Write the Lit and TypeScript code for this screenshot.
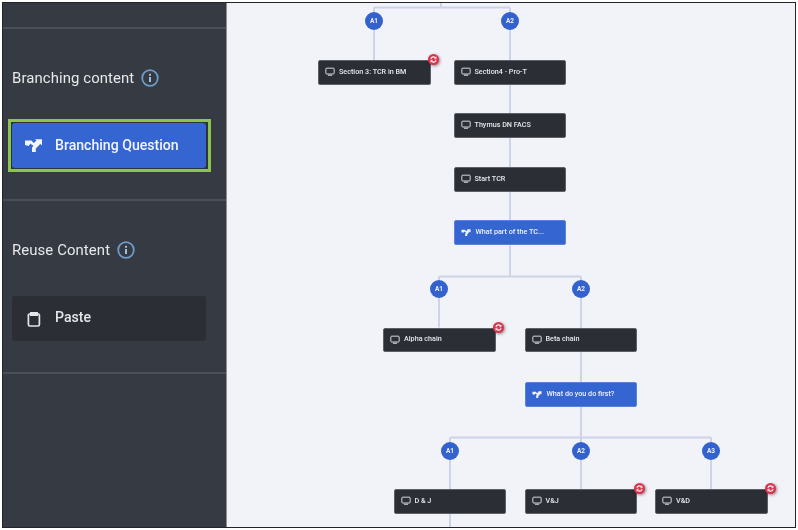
import { LitElement, html, css, svg } from "lit";
import { customElement } from "lit/decorators.js";

type Node = { x: number; y: number; label: string; q?: boolean; badge?: boolean };
type Circle = { x: number; y: number; label: string };

const ORIGIN_X = 227;
const ORIGIN_Y = 2.5;

const nodes: Node[] = [
  { x: 318, y: 60, label: "Section 3: TCR in BM", badge: true },
  { x: 453.5, y: 60, label: "Section4 - Pro-T" },
  { x: 453.5, y: 113, label: "Thymus DN FACS" },
  { x: 453.5, y: 167, label: "Start TCR" },
  { x: 453.5, y: 220, label: "What part of the TC...", q: true },
  { x: 383, y: 327.5, label: "Alpha chain", badge: true },
  { x: 524.5, y: 327.5, label: "Beta chain" },
  { x: 524.5, y: 382, label: "What do you do first?", q: true },
  { x: 393.5, y: 489, label: "D & J" },
  { x: 524.5, y: 489, label: "V&J", badge: true },
  { x: 655, y: 489, label: "V&D", badge: true },
];

const circles: Circle[] = [
  { x: 374, y: 21, label: "A1" },
  { x: 510, y: 21, label: "A2" },
  { x: 439, y: 289, label: "A1" },
  { x: 581, y: 289, label: "A2" },
  { x: 450, y: 450.5, label: "A1" },
  { x: 581, y: 450.5, label: "A2" },
  { x: 711, y: 450.5, label: "A3" },
];

const lines: [number, number, number, number][] = [
  [441, 0, 441, 7],
  [374, 7, 510, 7],
  [374, 7, 374, 60],
  [510, 7, 510, 220],
  [510, 245, 510, 276],
  [439, 276, 581, 276],
  [439, 276, 439, 327],
  [581, 276, 581, 382],
  [581, 406, 581, 437],
  [450, 437, 711, 437],
  [450, 437, 450, 527],
  [581, 437, 581, 489],
  [711, 437, 711, 489],
];

const branchIcon = (cls: string) => html`<svg class=${cls} viewBox="0 0 17 13" fill="currentColor">
  <path d="M0 1.5h6.5l2.2 2.5 2.8-2.5L9.8.3H17v6l-1.8-1.3-4.4 4.6V13H7V8.8l1.4-2-3-2L3.6 7 0 6z" />
</svg>`;

const screenIcon = html`<svg class="ico" viewBox="0 0 12 10" fill="none" stroke="currentColor" stroke-width="1.1">
  <rect x="1" y="1" width="10" height="7" rx="1" />
  <path d="M3.5 9.5h5" />
</svg>`;

const infoIcon = html`<svg class="info" viewBox="0 0 18 18" fill="none">
  <circle cx="9" cy="9" r="7.8" stroke="#6f9ac6" stroke-width="1.8" />
  <rect x="8" y="8" width="2" height="5" fill="#9dbddd" />
  <rect x="8" y="4.8" width="2" height="2" fill="#9dbddd" />
</svg>`;

@customElement("app-root")
export class AppRoot extends LitElement {
  static styles = css`
    :host {
      display: block;
      width: 798px;
      height: 530px;
      background: #fff;
      font-family: Roboto, "Liberation Sans", sans-serif;
      overflow: hidden;
    }
    .frame {
      box-sizing: border-box;
      width: 794px;
      height: 526.5px;
      margin: 1.5px 0 0 2px;
      border: 1px solid #222428;
      display: flex;
      filter: blur(0.45px);
    }
    .side {
      box-sizing: border-box;
      width: 224px;
      flex: none;
      background: #363b43;
      color: #e8eaed;
      display: flex;
      flex-direction: column;
      border-right: 1px solid #8d9097;
    }
    .sec {
      border-bottom: 2px solid #4a4f58;
      box-sizing: border-box;
      padding: 0 9px;
      flex: none;
    }
    .top { height: 26px; }
    .branch { height: 172px; padding-top: 38px; }
    .reuse { height: 173px; padding-top: 38px; }
    .head {
      display: flex;
      align-items: center;
      gap: 7px;
      height: 22px;
      font-size: 14.9px;
      letter-spacing: 0.1px;
      color: #e6e8ea;
    }
    .info { width: 18px; height: 18px; flex: none; }
    .outline {
      margin: 30px 0 0 -4px;
      width: 203px;
      height: 53px;
      box-sizing: border-box;
      border: 3px solid #8cc44f;
      padding: 1.5px 2px 0 1px;
      background: #2f333a;
    }
    .btn {
      box-sizing: border-box;
      height: 45px;
      width: 194px;
      border-radius: 3px;
      display: flex;
      align-items: center;
      gap: 13px;
      padding: 0 0 1px 13px;
      font-size: 14.1px;
      font-weight: 500;
    }
    .q {
      background: #3565d0;
      color: #f2f5ff;
    }
    .q .bi { width: 17px; height: 13px; flex: none; }
    .paste {
      margin-top: 35px;
      background: #2b2e35;
      color: #e4e6e8;
      padding-left: 15px;
      gap: 14px;
    }
    .paste svg { width: 14px; height: 16px; flex: none; margin-top: 3px; }
    .paste span { margin-bottom: 1px; }
    .canvas {
      flex: 1;
      background: #f1f3f9;
      position: relative;
      overflow: hidden;
    }
    .wires {
      position: absolute;
      left: 0;
      top: 0;
      width: 568px;
      height: 524.5px;
    }
    .layer { position: absolute; inset: 0; }
    .node {
      position: absolute;
      box-sizing: border-box;
      width: 112.5px;
      height: 24.5px;
      border-radius: 2px;
      background: #2b2e34;
      border: 1px solid #5d6167;
      color: #e6e8ec;
      font-size: 7.2px;
      font-weight: 500;
      display: flex;
      align-items: center;
      gap: 4px;
      padding: 0 0 2px 6px;
      white-space: nowrap;
    }
    .node.isq {
      background: #3565d0;
      border-color: #5b83dc;
      color: #eef2ff;
    }
    .ico { width: 10px; height: 9px; flex: none; margin-top: 1px; }
    .bis { width: 10px; height: 7px; flex: none; margin: 2px 1px 0 0; }
    .badge {
      position: absolute;
      right: -9px;
      top: -7px;
      width: 11px;
      height: 11px;
      border-radius: 50%;
      background: #d9344d;
      box-shadow: 1px 1px 3px rgba(60, 20, 30, 0.5);
      display: flex;
      align-items: center;
      justify-content: center;
    }
    .badge svg { width: 7px; height: 7px; }
    .circle {
      position: absolute;
      width: 18px;
      height: 18px;
      margin: -9px 0 0 -9px;
      border-radius: 50%;
      background: #3362cf;
      color: #eef2ff;
      font-size: 6.5px;
      font-weight: 700;
      display: flex;
      align-items: center;
      justify-content: center;
    }
  `;

  render() {
    return html`
      <div class="frame">
        <aside class="side">
          <div class="sec top"></div>
          <div class="sec branch">
            <div class="head">Branching content ${infoIcon}</div>
            <div class="outline">
              <div class="btn q">${branchIcon("bi")}<span>Branching Question</span></div>
            </div>
          </div>
          <div class="sec reuse">
            <div class="head">Reuse Content ${infoIcon}</div>
            <div class="btn paste">
              <svg viewBox="0 0 14 16" fill="none" stroke="currentColor" stroke-width="1.7">
                <path d="M3.5 3H2.4a1 1 0 0 0-1 1v9.5a1.5 1.5 0 0 0 1.5 1.5h8a1.5 1.5 0 0 0 1.5-1.5V4a1 1 0 0 0-1-1h-1" />
                <rect x="3.5" y="1.5" width="7" height="3" fill="currentColor" stroke-width="1" />
              </svg>
              <span>Paste</span>
            </div>
          </div>
        </aside>
        <main class="canvas">
          <svg class="wires" viewBox="${ORIGIN_X} ${ORIGIN_Y} 568 524.5">
            ${lines.map(
              ([a, b, c, d]) =>
                svg`<line x1=${a} y1=${b} x2=${c} y2=${d} stroke="#ccd4e6" stroke-width="2" />`
            )}
          </svg>
          <div class="layer">
            ${circles.map(
              (c) =>
                html`<div class="circle" style="left:${c.x - ORIGIN_X}px;top:${c.y - ORIGIN_Y}px">${c.label}</div>`
            )}
            ${nodes.map(
              (n) => html`<div
                class="node ${n.q ? "isq" : ""}"
                style="left:${n.x - ORIGIN_X}px;top:${n.y - ORIGIN_Y}px"
              >
                ${n.q ? branchIcon("bis") : screenIcon}<span>${n.label}</span>
                ${n.badge
                  ? html`<div class="badge">
                      <svg viewBox="0 0 8 8" fill="none" stroke="#fff" stroke-width="1.2">
                        <path d="M1 3.4A3 3 0 0 1 6.6 2.6M7 4.6A3 3 0 0 1 1.4 5.4" />
                        <path d="M7 .8v2.4H4.8M1 7.2V4.8h2.2" stroke-width="0.8" />
                      </svg>
                    </div>`
                  : ""}
              </div>`
            )}
          </div>
        </main>
      </div>
    `;
  }
}
